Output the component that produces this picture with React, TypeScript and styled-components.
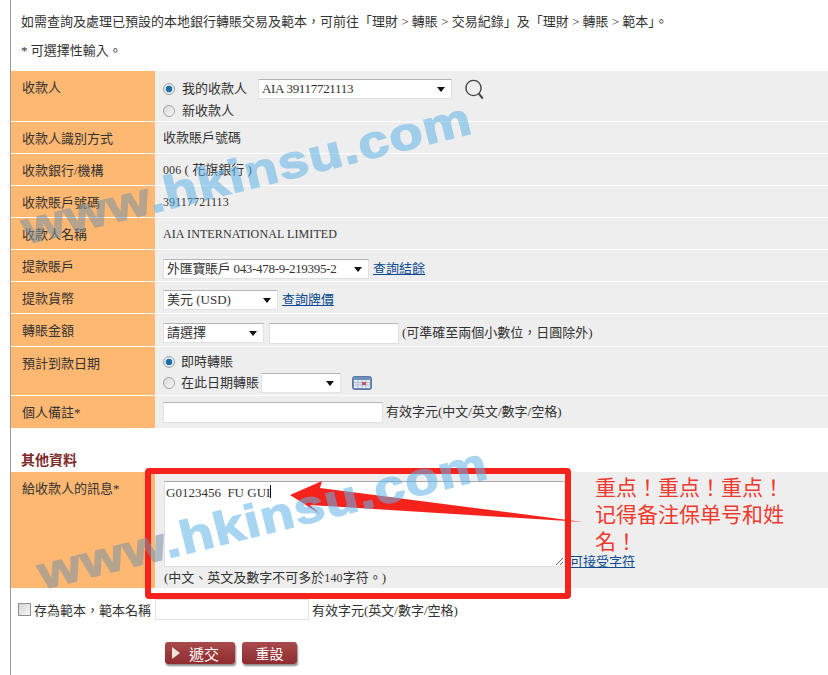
import { FC, ReactNode } from 'react'
import styled, { createGlobalStyle } from 'styled-components'

const GlobalStyle = createGlobalStyle`
    html, body { margin: 0; padding: 0; background: #fff; }
    body {
        font-family: "Liberation Serif", "Noto Sans CJK TC", serif;
        font-size: 13px;
        color: #333;
    }
`

type FormRowProps = {
    label: string;
    height: number;
    children: ReactNode;
}

const FormRow: FC<FormRowProps> = ({ label, height, children }) => (
    <Row $height={height}>
        <Label>{label}</Label>
        <Value>{children}</Value>
    </Row>
)

type DropdownProps = {
    width: number;
    text: string;
    tight?: boolean;
}

const Dropdown: FC<DropdownProps> = ({ width, text, tight }) => (
    <SelectWrap $width={width}>
        <Select defaultValue={text} $tight={tight}>
            <option>{text}</option>
        </Select>
    </SelectWrap>
)

const SearchIcon = () => (
    <svg width="20" height="21" viewBox="0 0 20 21" fill="none" stroke="#444" strokeWidth="1.4">
        <circle cx="9.5" cy="9" r="7.6" />
        <path d="M14.8 14.6 L18.8 19.6" strokeWidth="2" />
    </svg>
)

const CalendarIcon = () => (
    <svg width="20" height="14" viewBox="0 0 20 14">
        <rect x="0.5" y="0.5" width="19" height="13" rx="2" fill="#6f8fb8" stroke="#5a78a0" />
        <rect x="2" y="4" width="16" height="8" fill="#e4e9f2" />
        <path d="M2 6.5H18M2 9H18M6 4V12M10 4V12M14 4V12" stroke="#9fb2cf" strokeWidth="0.7" />
        <rect x="10" y="6" width="4" height="3" fill="#c9565e" />
    </svg>
)

const App: FC = () => (
    <>
        <GlobalStyle />
        <Page>
            <Main>
                <Notice>
                    <NoticeLine>如需查詢及處理已預設的本地銀行轉賬交易及範本，可前往「理財 &gt; 轉賬 &gt; 交易紀錄」及「理財 &gt; 轉賬 &gt; 範本」。</NoticeLine>
                    <NoticeLine>* 可選擇性輸入。</NoticeLine>
                </Notice>

                <Table>
                    <FormRow label="收款人" height={50}>
                        <Stack $offset={7}>
                            <Inline>
                                <Radio $checked />
                                <RadioText>我的收款人</RadioText>
                                <Dropdown width={194} text="AIA 39117721113" tight />
                                <IconSlot><SearchIcon /></IconSlot>
                            </Inline>
                            <Inline>
                                <Radio />
                                <RadioText>新收款人</RadioText>
                            </Inline>
                        </Stack>
                    </FormRow>
                    <FormRow label="收款人識別方式" height={31}>收款賬戶號碼</FormRow>
                    <FormRow label="收款銀行/機構" height={31}><Latin>006</Latin>&nbsp;( 花旗銀行 )</FormRow>
                    <FormRow label="收款賬戶號碼" height={31}><Latin>39117721113</Latin></FormRow>
                    <FormRow label="收款人名稱" height={31}><Latin>AIA INTERNATIONAL LIMITED</Latin></FormRow>
                    <FormRow label="提款賬戶" height={31}>
                        <Inline $offset={6}>
                            <Dropdown width={206} text="外匯寶賬戶 043-478-9-219395-2" tight />
                            <TextLink href="#">查詢結餘</TextLink>
                        </Inline>
                    </FormRow>
                    <FormRow label="提款貨幣" height={31}>
                        <Inline $offset={5}>
                            <Dropdown width={115} text="美元 (USD)" />
                            <TextLink href="#">查詢牌價</TextLink>
                        </Inline>
                    </FormRow>
                    <FormRow label="轉賬金額" height={32}>
                        <Inline $offset={6}>
                            <Dropdown width={101} text="請選擇" />
                            <TextInput $width={130} $gap={5} />
                            <Hint>(可準確至兩個小數位，日圓除外)</Hint>
                        </Inline>
                    </FormRow>
                    <FormRow label="預計到款日期" height={48}>
                        <Stack $offset={3}>
                            <Inline>
                                <Radio $checked />
                                <DateText>即時轉賬</DateText>
                            </Inline>
                            <Inline>
                                <Radio />
                                <DateText>在此日期轉賬</DateText>
                                <Dropdown width={80} text=" " />
                                <CalendarSlot><CalendarIcon /></CalendarSlot>
                            </Inline>
                        </Stack>
                    </FormRow>
                    <FormRow label="個人備註*" height={32}>
                        <Inline>
                            <TextInput $width={220} />
                            <Hint>有效字元(中文/英文/數字/空格)</Hint>
                        </Inline>
                    </FormRow>
                </Table>

                <SectionTitle>其他資料</SectionTitle>

                <MessageRow>
                    <Label>給收款人的訊息*</Label>
                    <MessageBody>
                        <MessageLine>
                            <MessageBox defaultValue="G0123456  FU GUI" />
                            <AcceptLink href="#">可接受字符</AcceptLink>
                        </MessageLine>
                        <Caption>(中文、英文及數字不可多於<Latin>140</Latin>字符。)</Caption>
                    </MessageBody>
                </MessageRow>

                <TemplateRow>
                    <CheckBox />
                    <TemplateLabel>存為範本，範本名稱</TemplateLabel>
                    <TemplateInput />
                    <Hint>有效字元(英文/數字/空格)</Hint>
                </TemplateRow>

                <Actions>
                    <SubmitButton><Play />遞交</SubmitButton>
                    <ResetButton>重設</ResetButton>
                </Actions>
            </Main>

            <RedBox />
            <Caret />
            <Arrow viewBox="0 0 300 46" width="300" height="46">
                <polygon points="0,15 32,1 30,8 293,42 20,25 30,34" fill="#f5231c" />
            </Arrow>
            <Annotation>重点！重点！重点！记得备注保单号和姓名！</Annotation>

            <Watermark $left={30} $top={198}><WatermarkGray>www</WatermarkGray>.hkinsu.com</Watermark>
            <Watermark $left={46} $top={543}><WatermarkGray>www</WatermarkGray>.hkinsu.com</Watermark>
        </Page>
    </>
)

const Page = styled.div`
    position: relative;
    width: 828px;
    height: 675px;
    overflow: hidden;
    background: #fff;
`

const Main = styled.div`
    margin-left: 10px;
    height: 675px;
    border-left: 1px solid #9a9a9a;
`

const Notice = styled.div`
    height: 71px;
    box-sizing: border-box;
    padding: 12px 0 0 10px;
`

const NoticeLine = styled.div`
    height: 29px;
    line-height: 20px;
`

const Table = styled.div`
    display: flex;
    flex-direction: column;
    gap: 1px;
`

const Row = styled.div<{ $height: number }>`
    display: flex;
    height: ${p => p.$height}px;
    background: #eeeeee;
`

const Label = styled.div`
    width: 144px;
    flex: none;
    box-sizing: border-box;
    padding: 8px 0 0 11px;
    background: #ffb871;
    line-height: 18px;
`

const Value = styled.div`
    flex: 1;
    display: flex;
    align-items: center;
    padding-left: 8px;
    line-height: 18px;
`

const Latin = styled.span`
    font-size: 12px;
    letter-spacing: 0.1px;
`

const Stack = styled.div<{ $offset?: number }>`
    display: flex;
    flex-direction: column;
    gap: 1px;
    margin-top: ${p => p.$offset ?? 0}px;
`

const Inline = styled.div<{ $offset?: number }>`
    display: flex;
    align-items: center;
    min-height: 20px;
    margin-top: ${p => p.$offset ?? 0}px;
`

const Radio = styled.span<{ $checked?: boolean }>`
    width: 12px;
    height: 12px;
    flex: none;
    box-sizing: border-box;
    border-radius: 50%;
    border: 1px solid #a3a3a3;
    background: ${p => p.$checked
        ? 'radial-gradient(circle, #1d6fa8 0 3px, #dfe8ee 3.6px)'
        : 'linear-gradient(135deg, #d9d9d9, #f7f7f7)'};
`

const RadioText = styled.span`
    margin-left: 7px;
    width: 76px;
`

const DateText = styled.span`
    margin-left: 6px;
    margin-right: 2px;
`

const SelectWrap = styled.div<{ $width: number }>`
    position: relative;
    flex: none;
    width: ${p => p.$width}px;
    height: 20px;
    &::after {
        content: "";
        position: absolute;
        right: 7px;
        top: 8px;
        border: 4px solid transparent;
        border-top: 5px solid #111;
        border-bottom: 0;
    }
`

const Select = styled.select<{ $tight?: boolean }>`
    appearance: none;
    width: 100%;
    height: 100%;
    box-sizing: border-box;
    padding: 0 0 0 3px;
    border: 1px solid #e2e2e2;
    border-top-color: #b5b5b5;
    border-radius: 0;
    background: #fff;
    color: #333;
    font: inherit;
    letter-spacing: ${p => (p.$tight ? '-0.3px' : '0')};
    outline: none;
`

const IconSlot = styled.span`
    display: flex;
    margin-left: 12px;
`

const CalendarSlot = styled.span`
    display: flex;
    margin-left: 11px;
`

const TextLink = styled.a`
    margin-left: 4px;
    color: #0b4a8f;
    text-decoration: underline;
`

const TextInput = styled.input<{ $width: number; $gap?: number }>`
    box-sizing: border-box;
    width: ${p => p.$width}px;
    height: 21px;
    margin-left: ${p => p.$gap ?? 0}px;
    border: 1px solid #e0e0e0;
    border-top-color: #b5b5b5;
    background: #fff;
    outline: none;
`

const Hint = styled.span`
    margin-left: 3px;
    white-space: nowrap;
`

const SectionTitle = styled.div`
    height: 44px;
    box-sizing: border-box;
    padding: 24px 0 0 10px;
    line-height: 18px;
    font-size: 14px;
    font-weight: 700;
    color: #7d2a2a;
`

const MessageRow = styled.div`
    display: flex;
    height: 116px;
    background: #eeeeee;
`

const MessageBody = styled.div`
    flex: 1;
    padding: 9px 0 0 9px;
`

const MessageLine = styled.div`
    display: flex;
    align-items: flex-end;
`

const MessageBox = styled.textarea`
    box-sizing: border-box;
    width: 401px;
    height: 86px;
    padding: 2px 2px 2px 1px;
    border: 1px solid #e0e0e0;
    border-top-color: #a8a8a8;
    background: #fff;
    color: #333;
    font: inherit;
    line-height: 18px;
    outline: none;
`

const AcceptLink = styled(TextLink)`
    position: relative;
    top: 3px;
    margin-left: 5px;
    line-height: 16px;
`

const Caption = styled.div`
    margin-top: 2px;
    line-height: 18px;
`

const TemplateRow = styled.div`
    display: flex;
    align-items: center;
    height: 20px;
    margin-top: 11px;
    padding-left: 7px;
`

const CheckBox = styled.span`
    width: 13px;
    height: 13px;
    flex: none;
    box-sizing: border-box;
    border: 1px solid #8f8f8f;
    background: linear-gradient(135deg, #d4d4d4, #f5f5f5);
`

const TemplateLabel = styled.span`
    margin-left: 3px;
    width: 121px;
    white-space: nowrap;
`

const TemplateInput = styled.input`
    box-sizing: border-box;
    width: 154px;
    height: 21px;
    border: 1px solid #e3e3e3;
    background: #fff;
    outline: none;
`

const Actions = styled.div`
    display: flex;
    gap: 7px;
    margin-top: 23px;
    padding-left: 154px;
`

const ButtonBase = styled.button`
    display: flex;
    align-items: center;
    justify-content: center;
    height: 22px;
    padding: 0;
    border: 0;
    border-radius: 3px;
    background: linear-gradient(#a84a4c, #8f2c30);
    box-shadow: 1px 2px 2px #8c8c8c;
    color: #fff;
    font: inherit;
    font-size: 14px;
`

const SubmitButton = styled(ButtonBase)`
    width: 70px;
    justify-content: flex-start;
    padding-left: 7px;
    gap: 9px;
    font-size: 15px;
`

const ResetButton = styled(ButtonBase)`
    width: 55px;
`

const Play = styled.span`
    border: 6px solid transparent;
    border-left: 8px solid #f3e6d8;
    border-right: 0;
`

const Watermark = styled.div<{ $left: number; $top: number }>`
    position: absolute;
    left: ${p => p.$left}px;
    top: ${p => p.$top}px;
    font-family: "Liberation Sans", sans-serif;
    font-size: 46px;
    font-weight: 700;
    letter-spacing: 1px;
    line-height: 60px;
    white-space: nowrap;
    color: #62b4e8;
    -webkit-text-stroke: 1.4px currentColor;
    opacity: 0.55;
    transform: rotate(-14deg) scaleX(1.19);
    transform-origin: left bottom;
    pointer-events: none;
`

const WatermarkGray = styled.span`
    color: #7a92a6;
`

const RedBox = styled.div`
    position: absolute;
    left: 145px;
    top: 468px;
    width: 426px;
    height: 131px;
    box-sizing: border-box;
    border: 6px solid #f5231c;
    border-radius: 4px;
    pointer-events: none;
`

const Caret = styled.div`
    position: absolute;
    left: 270px;
    top: 485px;
    width: 1px;
    height: 13px;
    background: #111;
`

const Arrow = styled.svg`
    position: absolute;
    left: 290px;
    top: 480px;
`

const Annotation = styled.div`
    position: absolute;
    left: 595px;
    top: 473px;
    width: 190px;
    font-family: "Noto Sans CJK TC", sans-serif;
    font-size: 21px;
    line-height: 27px;
    color: #ee3a2e;
`

export default App
